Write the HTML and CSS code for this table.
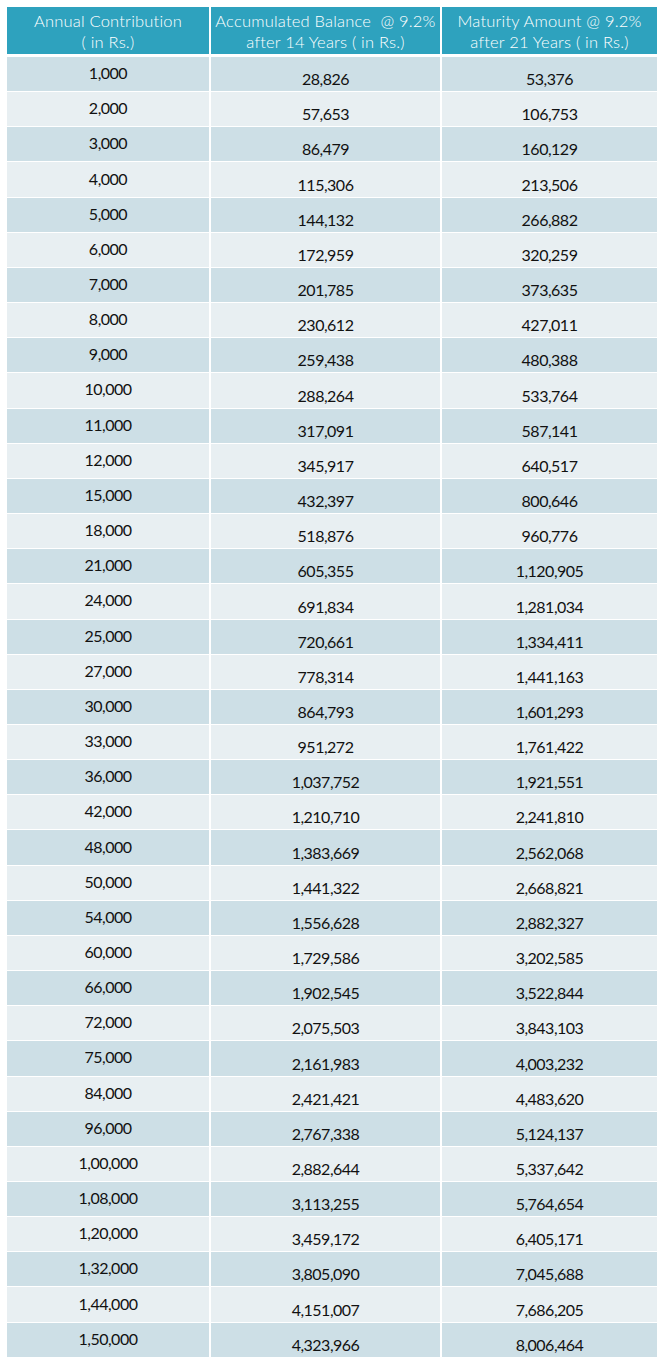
FILE: index.html
```html
<!DOCTYPE html>
<html>
<head>
<meta charset="utf-8">
<link rel="stylesheet" href="styles.css">
</head>
<body>
<div class="table">
  <div class="row head">
    <div class="cell">Annual Contribution<br>( in Rs.)</div>
    <div class="cell">Accumulated Balance&nbsp; @ 9.2%<br>after 14 Years ( in Rs.)</div>
    <div class="cell">Maturity Amount @ 9.2%<br>after 21 Years ( in Rs.)</div>
  </div>
  <div class="body">
    <div class="row dark"><div class="cell c1">1,000</div><div class="cell c2">28,826</div><div class="cell c2">53,376</div></div>
    <div class="row light"><div class="cell c1">2,000</div><div class="cell c2">57,653</div><div class="cell c2">106,753</div></div>
    <div class="row dark"><div class="cell c1">3,000</div><div class="cell c2">86,479</div><div class="cell c2">160,129</div></div>
    <div class="row light"><div class="cell c1">4,000</div><div class="cell c2">115,306</div><div class="cell c2">213,506</div></div>
    <div class="row dark"><div class="cell c1">5,000</div><div class="cell c2">144,132</div><div class="cell c2">266,882</div></div>
    <div class="row light"><div class="cell c1">6,000</div><div class="cell c2">172,959</div><div class="cell c2">320,259</div></div>
    <div class="row dark"><div class="cell c1">7,000</div><div class="cell c2">201,785</div><div class="cell c2">373,635</div></div>
    <div class="row light"><div class="cell c1">8,000</div><div class="cell c2">230,612</div><div class="cell c2">427,011</div></div>
    <div class="row dark"><div class="cell c1">9,000</div><div class="cell c2">259,438</div><div class="cell c2">480,388</div></div>
    <div class="row light"><div class="cell c1">10,000</div><div class="cell c2">288,264</div><div class="cell c2">533,764</div></div>
    <div class="row dark"><div class="cell c1">11,000</div><div class="cell c2">317,091</div><div class="cell c2">587,141</div></div>
    <div class="row light"><div class="cell c1">12,000</div><div class="cell c2">345,917</div><div class="cell c2">640,517</div></div>
    <div class="row dark"><div class="cell c1">15,000</div><div class="cell c2">432,397</div><div class="cell c2">800,646</div></div>
    <div class="row light"><div class="cell c1">18,000</div><div class="cell c2">518,876</div><div class="cell c2">960,776</div></div>
    <div class="row dark"><div class="cell c1">21,000</div><div class="cell c2">605,355</div><div class="cell c2">1,120,905</div></div>
    <div class="row light"><div class="cell c1">24,000</div><div class="cell c2">691,834</div><div class="cell c2">1,281,034</div></div>
    <div class="row dark"><div class="cell c1">25,000</div><div class="cell c2">720,661</div><div class="cell c2">1,334,411</div></div>
    <div class="row light"><div class="cell c1">27,000</div><div class="cell c2">778,314</div><div class="cell c2">1,441,163</div></div>
    <div class="row dark"><div class="cell c1">30,000</div><div class="cell c2">864,793</div><div class="cell c2">1,601,293</div></div>
    <div class="row light"><div class="cell c1">33,000</div><div class="cell c2">951,272</div><div class="cell c2">1,761,422</div></div>
    <div class="row dark"><div class="cell c1">36,000</div><div class="cell c2">1,037,752</div><div class="cell c2">1,921,551</div></div>
    <div class="row light"><div class="cell c1">42,000</div><div class="cell c2">1,210,710</div><div class="cell c2">2,241,810</div></div>
    <div class="row dark"><div class="cell c1">48,000</div><div class="cell c2">1,383,669</div><div class="cell c2">2,562,068</div></div>
    <div class="row light"><div class="cell c1">50,000</div><div class="cell c2">1,441,322</div><div class="cell c2">2,668,821</div></div>
    <div class="row dark"><div class="cell c1">54,000</div><div class="cell c2">1,556,628</div><div class="cell c2">2,882,327</div></div>
    <div class="row light"><div class="cell c1">60,000</div><div class="cell c2">1,729,586</div><div class="cell c2">3,202,585</div></div>
    <div class="row dark"><div class="cell c1">66,000</div><div class="cell c2">1,902,545</div><div class="cell c2">3,522,844</div></div>
    <div class="row light"><div class="cell c1">72,000</div><div class="cell c2">2,075,503</div><div class="cell c2">3,843,103</div></div>
    <div class="row dark"><div class="cell c1">75,000</div><div class="cell c2">2,161,983</div><div class="cell c2">4,003,232</div></div>
    <div class="row light"><div class="cell c1">84,000</div><div class="cell c2">2,421,421</div><div class="cell c2">4,483,620</div></div>
    <div class="row dark"><div class="cell c1">96,000</div><div class="cell c2">2,767,338</div><div class="cell c2">5,124,137</div></div>
    <div class="row light"><div class="cell c1">1,00,000</div><div class="cell c2">2,882,644</div><div class="cell c2">5,337,642</div></div>
    <div class="row dark"><div class="cell c1">1,08,000</div><div class="cell c2">3,113,255</div><div class="cell c2">5,764,654</div></div>
    <div class="row light"><div class="cell c1">1,20,000</div><div class="cell c2">3,459,172</div><div class="cell c2">6,405,171</div></div>
    <div class="row dark"><div class="cell c1">1,32,000</div><div class="cell c2">3,805,090</div><div class="cell c2">7,045,688</div></div>
    <div class="row light"><div class="cell c1">1,44,000</div><div class="cell c2">4,151,007</div><div class="cell c2">7,686,205</div></div>
    <div class="row dark"><div class="cell c1">1,50,000</div><div class="cell c2">4,323,966</div><div class="cell c2">8,006,464</div></div>
  </div>
</div>
</body>
</html>
```

FILE: styles.css
```css
html, body {
  margin: 0;
  padding: 0;
  background: #ffffff;
}
body {
  padding: 7px 8px 0 7px;
  font-family: Lato, "Liberation Sans", sans-serif;
}
.table {
  width: 650px;
  display: flex;
  flex-direction: column;
  gap: 3px;
}
.row {
  display: grid;
  grid-template-columns: 202px 229px 215px;
  column-gap: 2px;
}
.head {
  height: 47px;
}
.head .cell {
  background: #2ea2be;
  color: #ffffff;
  font-size: 16.5px;
  line-height: 21px;
  text-align: center;
  display: flex;
  align-items: center;
  justify-content: center;
  padding-top: 3px;
  font-weight: 300;
  letter-spacing: 0.2px;
}
.body {
  height: 1300px;
  display: flex;
  flex-direction: column;
  gap: 1px;
}
.body .row {
  flex: 1;
}
.cell {
  display: flex;
  justify-content: center;
  font-size: 16px;
  line-height: 18px;
  color: #111111;
  letter-spacing: -0.5px;
}
.dark .cell {
  background: #cddfe6;
}
.light .cell {
  background: #e8eff2;
}
.c1 {
  align-items: center;
  padding-bottom: 2px;
}
.c2 {
  align-items: flex-end;
  padding-bottom: 3px;
}
```
